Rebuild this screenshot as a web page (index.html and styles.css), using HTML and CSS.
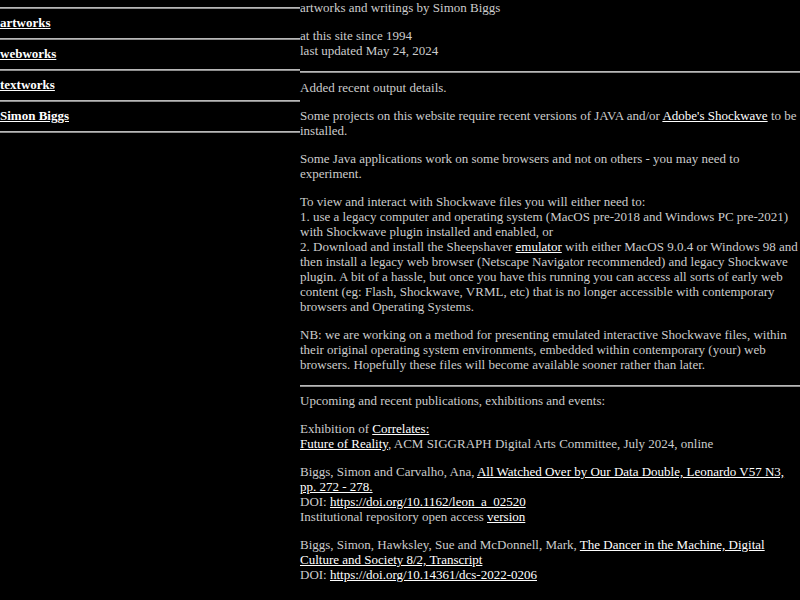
FILE: index.html
```html
<!DOCTYPE html>
<html>
<head>
<meta charset="utf-8">
<title>Simon Biggs</title>
<link rel="stylesheet" href="styles.css">
</head>
<body>
<div class="page">
  <nav class="nav">
    <hr class="rule">
    <div class="nav-item"><a href="#">artworks</a></div>
    <hr class="rule">
    <div class="nav-item"><a href="#">webworks</a></div>
    <hr class="rule">
    <div class="nav-item"><a href="#">textworks</a></div>
    <hr class="rule">
    <div class="nav-item"><a href="#">Simon Biggs</a></div>
    <hr class="rule">
  </nav>
  <main class="main">
    <p>artworks and writings by Simon Biggs</p>
    <p>at this site since 1994<br>last updated May 24, 2024</p>
    <hr class="rule wide">
    <p>Added recent output details.</p>
    <p>Some projects on this website require recent versions of JAVA and/or <a href="#">Adobe's Shockwave</a> to be installed.</p>
    <p>Some Java applications work on some browsers and not on others - you may need to experiment.</p>
    <p>To view and interact with Shockwave files you will either need to:<br>1. use a legacy computer and operating system (MacOS pre-2018 and Windows PC pre-2021) with Shockwave plugin installed and enabled, or<br>2. Download and install the Sheepshaver <a href="#">emulator</a> with either MacOS 9.0.4 or Windows 98 and then install a legacy web browser (Netscape Navigator recommended) and legacy Shockwave plugin. A bit of a hassle, but once you have this running you can access all sorts of early web content (eg: Flash, Shockwave, VRML, etc) that is no longer accessible with contemporary browsers and Operating Systems.</p>
    <p>NB: we are working on a method for presenting emulated interactive Shockwave files, within their original operating system environments, embedded within contemporary (your) web browsers. Hopefully these files will become available sooner rather than later.</p>
    <hr class="rule wide">
    <p>Upcoming and recent publications, exhibitions and events:</p>
    <p>Exhibition of <a href="#">Correlates:<br>Future of Reality</a>, ACM SIGGRAPH Digital Arts Committee, July 2024, online</p>
    <p>Biggs, Simon and Carvalho, Ana, <a href="#">All Watched Over by Our Data Double, Leonardo V57 N3, pp. 272 - 278.</a><br>DOI: <a href="#">https://doi.org/10.1162/leon_a_02520</a><br>Institutional repository open access <a href="#">version</a></p>
    <p>Biggs, Simon, Hawksley, Sue and McDonnell, Mark, <a href="#">The Dancer in the Machine, Digital Culture and Society 8/2, Transcript</a><br>DOI: <a href="#">https://doi.org/10.14361/dcs-2022-0206</a></p>
  </main>
</div>
</body>
</html>
```
FILE: styles.css
```css
html {
  background: #000;
}
body {
  margin: 0;
  background: #000;
  color: #cccccc;
  font-family: "Liberation Serif", "Times New Roman", serif;
  font-size: 13px;
  line-height: 15px;
}
a {
  color: #fff;
  text-decoration: underline;
}
.page {
  display: grid;
  grid-template-columns: 300px 500px;
  align-items: start;
}
.rule {
  height: 0;
  border: 0;
  border-top: 1px solid #b8b8b8;
  border-bottom: 1px solid #8c8c8c;
  margin: 6.5px 0;
}
.nav-item {
  line-height: 16px;
  font-weight: bold;
}
.main p {
  margin: 0 0 13px 0;
}
.main .wide {
  margin: 0 0 6.5px 0;
}
```
